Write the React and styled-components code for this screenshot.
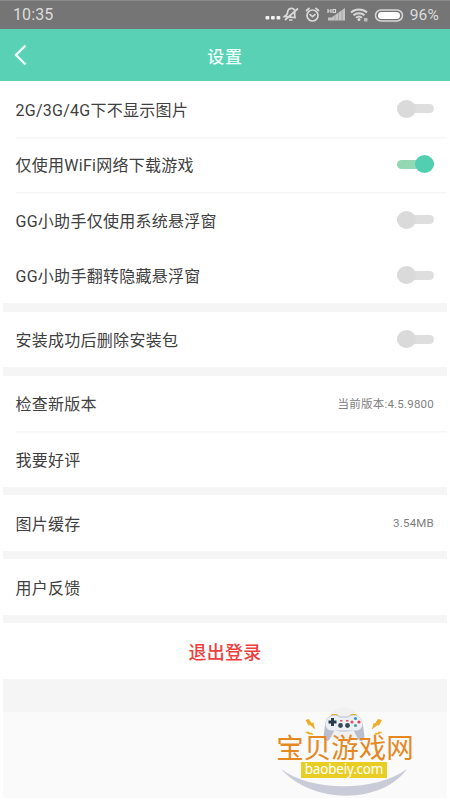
import React, { useState } from 'react';
import styled, { createGlobalStyle } from 'styled-components';

const GlobalStyle = createGlobalStyle`
    body {
        margin: 0;
        background: #fff;
        font-family: Roboto, "Noto Sans CJK SC", sans-serif;
    }
`

const Screen = styled.div`
    width: 450px;
    height: 800px;
    box-sizing: border-box;
    overflow: hidden;
    display: flex;
    flex-direction: column;
    background: #fff;
`

const StatusBar = styled.div`
    height: 29px;
    flex: none;
    box-sizing: border-box;
    padding: 0 11px 1px 13px;
    border-top: 1px solid #8a8a8a;
    display: flex;
    align-items: center;
    justify-content: space-between;
    background: #757575;
    color: #dcdcdc;
`

const Time = styled.span`
    font-size: 16px;
    letter-spacing: .1px;
`

const Battery = styled.span`
    font-size: 15.5px;
    margin-left: 6px;
    letter-spacing: .2px;
`

const StatusIcons = styled.div`
    display: flex;
    align-items: center;
`

const NavBar = styled.div`
    height: 52px;
    flex: none;
    display: grid;
    grid-template-columns: 60px 1fr 60px;
    align-items: center;
    background: #58d1b4;
    color: #effffa;
`

const Back = styled.button`
    display: flex;
    padding: 0 0 0 13px;
    border: 0;
    background: none;
    color: inherit;
`

const Title = styled.div`
    text-align: center;
    font-size: 17px;
    font-weight: 500;
    letter-spacing: .8px;
`

const Content = styled.div`
    flex: 1;
    display: flex;
    flex-direction: column;
    margin: 0 3px 2px;
    background: #fafafa;
`

const Groups = styled.div`
    display: flex;
    flex-direction: column;
    gap: 8.5px;
    padding-bottom: 33px;
    background: #f5f5f5;
`

const Group = styled.div`
    background: #fff;
`

const Row = styled.div`
    height: 55.5px;
    margin-left: 12.5px;
    padding-right: 13px;
    display: flex;
    align-items: center;
    justify-content: space-between;
    box-shadow: ${props => props.$line ? '0 1.5px 0 #f5f5f5' : 'none'};
`

const Label = styled.span`
    font-size: 16px;
    letter-spacing: .27px;
    color: #404040;
`

const Value = styled.span`
    font-size: 11.5px;
    letter-spacing: .22px;
    color: #808080;
`

const Switch = styled.div`
    width: 37px;
    height: 9px;
    border-radius: 5px;
    display: flex;
    align-items: center;
    justify-content: ${props => props.$on ? 'flex-end' : 'flex-start'};
    background: ${props => props.$on ? '#93d8b5' : '#dedede'};
`

const Knob = styled.span`
    width: 19px;
    height: 18px;
    border-radius: 50%;
    background: ${props => props.$on ? '#52ceb0' : '#dadada'};
`

const Logout = styled.button`
    width: 100%;
    height: 55.5px;
    border: 0;
    background: none;
    font-family: inherit;
    font-size: 18px;
    font-weight: 500;
    letter-spacing: .3px;
    color: #ee3f3f;
`

const Brand = styled.div`
    position: absolute;
    left: 272px;
    top: 702px;
    width: 146px;
    height: 96px;
    display: flex;
    flex-direction: column;
    align-items: center;
`

const BrandArt = styled.svg`
    position: absolute;
    left: 0;
    top: 0;
`

const BrandName = styled.div`
    position: relative;
    margin-top: 35px;
    margin-bottom: 1px;
    font-size: 27.5px;
    line-height: 24px;
    white-space: nowrap;
    color: #e5881f;
`

const BrandUrl = styled.div`
    position: relative;
    width: 86px;
    height: 16px;
    margin-right: 2px;
    font-family: "Noto Sans", sans-serif;
    font-size: 13.5px;
    letter-spacing: -.2px;
    line-height: 15px;
    text-align: center;
    white-space: nowrap;
    background: #e9cd22;
    color: #fff;
`

function Toggle({ initial }) {
    const [on, setOn] = useState(initial);
    return (<Switch role="switch" aria-checked={on} $on={on} onClick={() => setOn(!on)}>
        <Knob $on={on} />
    </Switch>)
}

function Icons() {
    return (<svg width="140" height="22" viewBox="262 3 140 22" fill="none" stroke="#d8d8d8" strokeWidth="1.7">
        <g fill="#f2f2f2" stroke="none">
            <rect x="263.500" y="15" width="3.800" height="3.500" rx="1" />
            <rect x="269" y="15" width="3.800" height="3.500" rx="1" />
            <rect x="274.500" y="15" width="3.800" height="3.500" rx="1" />
        </g>
        <g transform="translate(-2 0)">
            <path d="M284.500 15.500l2.500-2 1-4c1-2.500 5-3 6.500-.500 1 1.500-.500 4 .500 7.500zM289 19h3.500M298 7.500l-13 11.500" />
        </g>
        <circle cx="310.500" cy="14.500" r="5.500" />
        <path d="M307.500 13.200l3 2.500 3-2.500M304 10l3.500-3M317 10l-3.500-3" />
        <path d="M326 19.500v-3h3.500l13.500-9.500v12.500z" fill="#c4c4c4" stroke="none" />
        <path d="M333 14v6M336.500 11v9M340 9v11" stroke="#969696" strokeWidth=".6" />
        <path d="M326 8v4M326 10h3M329 8v4M331 8.500h2.500v3H331z" strokeWidth="1.200" />
        <path d="M349 11.500c4.500-4 11.500-4 16 0M351.500 14.200c3-2.700 8-2.700 11 0M354 16.800c2-1.700 4-1.700 6 0" strokeWidth="2" />
        <circle cx="357" cy="18.500" r="1.500" fill="#dcdcdc" stroke="none" />
        <rect x="362" y="17" width="3.500" height="3.500" fill="#bdbdbd" stroke="none" />
        <rect x="373.500" y="9" width="27" height="11" rx="5.500" strokeWidth="1.500" />
        <rect x="376" y="11" width="22" height="7" rx="3.500" fill="#fff" stroke="none" />
    </svg>)
}

function BrandLogo() {
    return (<Brand>
        <BrandArt width="146" height="96" viewBox="272 702 146 96">
            <circle cx="344" cy="725" r="17.500" fill="#f0f0f0" />
            <path d="M281 769c30 23 95 23 126 0-25 35-94 36-126 0z" fill="#c9cbd8" />
            <path d="M330 717l2-3h5l2 3zM349 717l2-3h5l2 3z" fill="#e8b03a" />
            <path d="M331 716c3-1.500 7-1 9 .500h8c2-1.500 6-2 9-.500 4 1 5.500 4 6 9l1.500 12c-1 5-5 5-7 1l-4-8c-5 2-14 2-19 0l-4 8c-2 4-6 4-7-1l1.500-12c.500-5 2-8 6-9z" fill="#b9bfcf" />
            <path d="M332 716c3-1 6 0 8 1.500h8c3-2.500 8-2.500 11-.500 6 5 4 13.500-3 13.500h-24c-8 0-9-12 0-14.500z" fill="#eceff3" />
            <path d="M332.500 718v8M328.500 722h8" stroke="#263e4b" strokeWidth="3" />
            <circle cx="355.500" cy="718.500" r="1.600" fill="#3c9bc4" />
            <circle cx="355.500" cy="725.500" r="1.600" fill="#4e9e9c" />
            <circle cx="352" cy="722" r="1.600" fill="#d95368" />
            <circle cx="359" cy="722" r="1.600" fill="#d9405c" />
            <circle cx="340.500" cy="725.500" r="2.400" fill="#344a59" />
            <circle cx="347.500" cy="725.500" r="2.400" fill="#344a59" />
            <path d="M340 720.800h2.500M346 720.800h2.500" stroke="#d65863" strokeWidth="1.500" />
            <path d="M305.500 720l3.500-1 2.500 4 2-.500 1.500 7-5-4.500-1.500.500zM305 732l4-.500 1 1.500 2-.200 1.500 2.200-5-.800zM382 720l-4-1-3 4.500-1.500-.500-1.500 6.500 5.500-4.500 1.500.500zM382.500 732l-4-.500-1 1.500-2-.200-1.500 2.200 5-.800z" fill="#edaf2b" />
        </BrandArt>
        <BrandName>宝贝游戏网</BrandName>
        <BrandUrl>baobeiy.com</BrandUrl>
    </Brand>)
}

export default function App() {
    return (<Screen>
        <GlobalStyle />
        <StatusBar>
            <Time>10:35</Time>
            <StatusIcons>
                <Icons />
                <Battery>96%</Battery>
            </StatusIcons>
        </StatusBar>
        <NavBar>
            <Back aria-label="返回">
                <svg width="16" height="22" viewBox="0 0 16 22" fill="none" stroke="currentColor" strokeWidth="2.400">
                    <path d="M12.500 1.500L3 11l9.500 9.500" />
                </svg>
            </Back>
            <Title>设置</Title>
        </NavBar>
        <Content>
            <Groups>
                <Group>
                    <Row $line><Label>2G/3G/4G下不显示图片</Label><Toggle initial={false} /></Row>
                    <Row $line><Label>仅使用WiFi网络下载游戏</Label><Toggle initial={true} /></Row>
                    <Row><Label>GG小助手仅使用系统悬浮窗</Label><Toggle initial={false} /></Row>
                    <Row><Label>GG小助手翻转隐藏悬浮窗</Label><Toggle initial={false} /></Row>
                </Group>
                <Group>
                    <Row><Label>安装成功后删除安装包</Label><Toggle initial={false} /></Row>
                </Group>
                <Group>
                    <Row $line><Label>检查新版本</Label><Value>当前版本:4.5.9800</Value></Row>
                    <Row><Label>我要好评</Label></Row>
                </Group>
                <Group>
                    <Row><Label>图片缓存</Label><Value>3.54MB</Value></Row>
                </Group>
                <Group>
                    <Row><Label>用户反馈</Label></Row>
                </Group>
                <Group>
                    <Logout>退出登录</Logout>
                </Group>
            </Groups>
        </Content>
        <BrandLogo />
    </Screen>)
}
